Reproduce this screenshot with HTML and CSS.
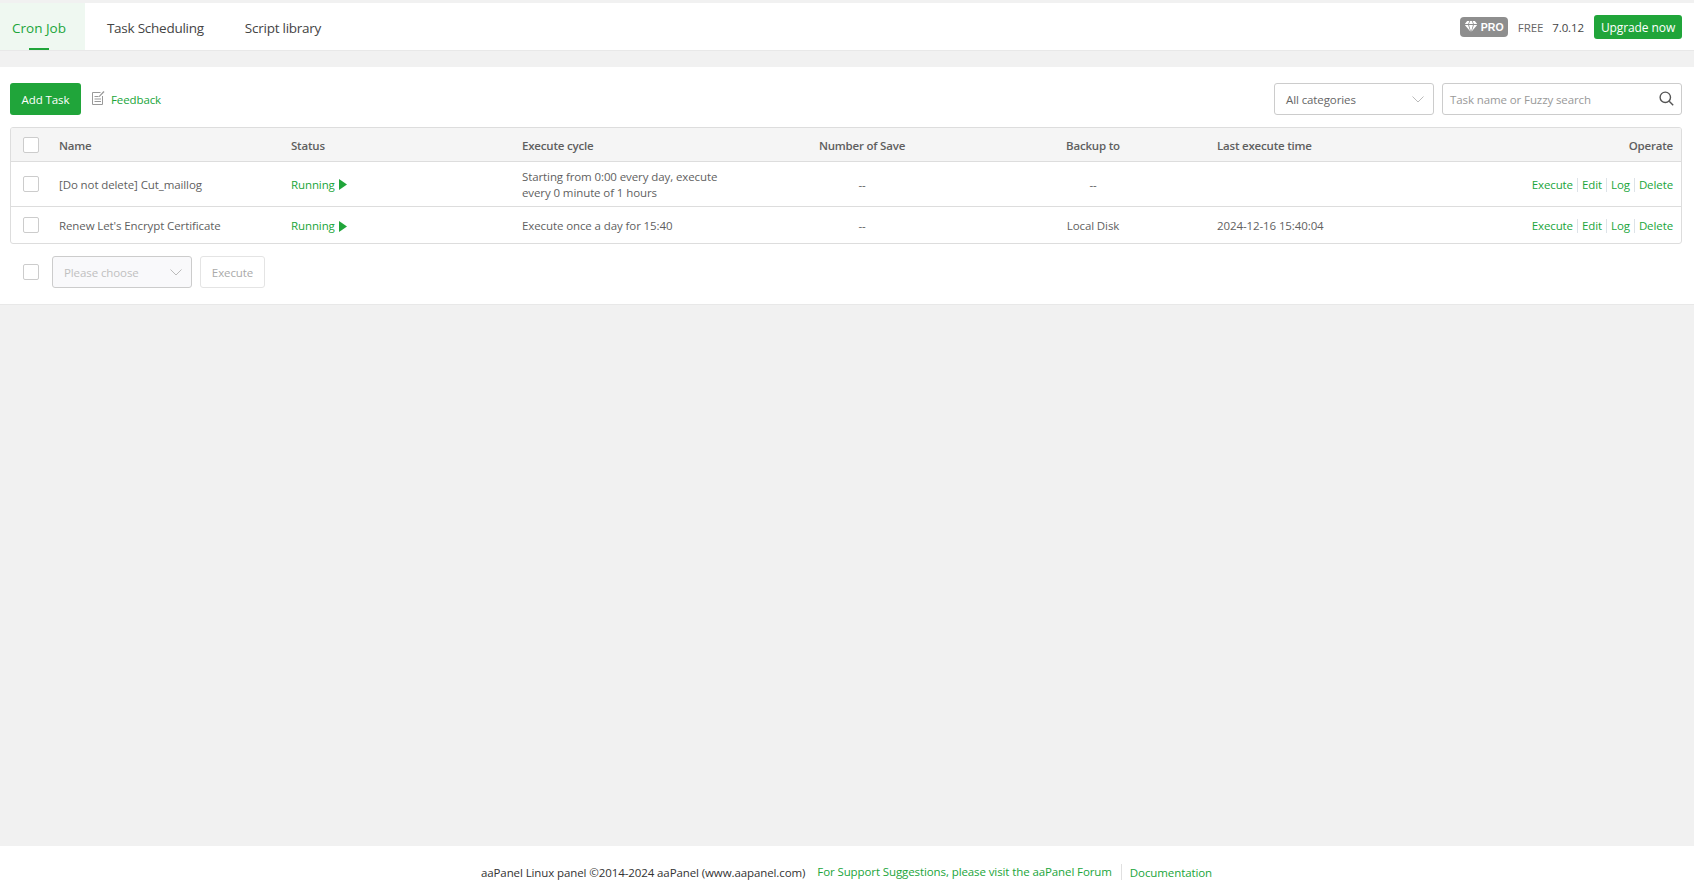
FILE: index.html
```html
<!DOCTYPE html>
<html lang="en">
<head>
<meta charset="utf-8">
<title>Cron</title>
<link rel="stylesheet" href="styles.css">
</head>
<body>
<div class="page">
  <header class="topbar">
    <nav class="tabs">
      <a class="tab active">Cron Job</a>
      <a class="tab">Task Scheduling</a>
      <a class="tab">Script library</a>
    </nav>
    <div class="top-right">
      <span class="pro">
        <svg class="gem" viewBox="0 0 16 13"><path d="M3.4 0h2.7L4.6 3.6H.7zM7 0h2L10.4 3.6H5.6zM9.9 0h2.7l2.7 3.6h-3.9zM.7 4.7h3.9l2.6 7.6zM5.7 4.7h4.6L8 12.6zM11.4 4.7h3.9l-6.5 7.6z" fill="#fff"/></svg>
        PRO
      </span>
      <span class="free">FREE</span>
      <span class="ver">7.0.12</span>
      <button class="btn-green upgrade">Upgrade now</button>
    </div>
  </header>

  <section class="card">
    <div class="toolbar">
      <div class="tool-left">
        <button class="btn-green add">Add Task</button>
        <a class="feedback">
          <svg class="fb-icon" viewBox="0 0 14 16" fill="none" stroke="#999" stroke-width="1"><path d="M9.5 2.5H1.5v12h10V6"/><path d="M3.5 6.5h4M3.5 9h6.5M3.5 11.5h6.5"/><path d="M7.5 6.5l5-5.5 1 1-5 5z" fill="#999" stroke="none"/></svg>
          <span>Feedback</span>
        </a>
      </div>
      <div class="tool-right">
        <div class="select cat"><span>All categories</span><svg class="chev" viewBox="0 0 12 7"><path d="M.5.5L6 6l5.500-5.500" fill="none" stroke="#bbb"/></svg></div>
        <div class="search">
          <span class="ph">Task name or Fuzzy search</span>
          <svg class="mag" viewBox="0 0 15 15" fill="none" stroke="#555" stroke-width="1.400"><circle cx="6.300" cy="6.300" r="5.200"/><path d="M10.200 10.200l4 4"/></svg>
        </div>
      </div>
    </div>

    <div class="table-wrap">
      <table class="tbl">
        <colgroup>
          <col class="c-check"><col class="c-name"><col class="c-status"><col class="c-cycle"><col class="c-save"><col class="c-backup"><col class="c-last"><col>
        </colgroup>
        <thead>
          <tr>
            <th><span class="check"></span></th>
            <th>Name</th>
            <th>Status</th>
            <th>Execute cycle</th>
            <th class="center">Number of Save</th>
            <th class="center">Backup to</th>
            <th>Last execute time</th>
            <th class="right">Operate</th>
          </tr>
        </thead>
        <tbody>
          <tr class="row-a">
            <td><span class="check"></span></td>
            <td>[Do not delete] Cut_maillog</td>
            <td><span class="running">Running<svg class="play" viewBox="0 0 8 11"><path d="M0 0l8 5.500L0 11z" fill="#20a53a"/></svg></span></td>
            <td>Starting from 0:00 every day, execute every 0 minute of 1 hours</td>
            <td class="center">--</td>
            <td class="center">--</td>
            <td></td>
            <td class="right ops"><a>Execute</a><i></i><a>Edit</a><i></i><a>Log</a><i></i><a>Delete</a></td>
          </tr>
          <tr class="row-b">
            <td><span class="check"></span></td>
            <td>Renew Let's Encrypt Certificate</td>
            <td><span class="running">Running<svg class="play" viewBox="0 0 8 11"><path d="M0 0l8 5.500L0 11z" fill="#20a53a"/></svg></span></td>
            <td>Execute once a day for 15:40</td>
            <td class="center">--</td>
            <td class="center">Local Disk</td>
            <td>2024-12-16 15:40:04</td>
            <td class="right ops"><a>Execute</a><i></i><a>Edit</a><i></i><a>Log</a><i></i><a>Delete</a></td>
          </tr>
        </tbody>
      </table>
    </div>

    <div class="batch">
      <span class="check"></span>
      <div class="select choose"><span>Please choose</span><svg class="chev" viewBox="0 0 12 7"><path d="M.5.5L6 6l5.500-5.500" fill="none" stroke="#bbb"/></svg></div>
      <button class="btn-exec">Execute</button>
    </div>
  </section>

  <div class="spacer"></div>

  <footer class="foot">
    <span class="copy">aaPanel Linux panel ©2014-2024 aaPanel (www.aapanel.com)</span>
    <a class="flink first">For Support Suggestions, please visit the aaPanel Forum</a>
    <a class="flink">Documentation</a>
  </footer>
</div>
</body>
</html>
```
FILE: styles.css
```css
* { box-sizing: border-box; }
html, body { margin: 0; height: 100%; }
body {
  background: #f1f1f1;
  font-family: "Open Sans", "Liberation Sans", sans-serif;
  font-size: 11.500px;
  letter-spacing: -0.1px;
  color: #666;
  overflow: hidden;
}
.page { display: flex; flex-direction: column; height: 881px; padding-top: 3px; }

.topbar {
  height: 48px;
  background: #fff;
  border-bottom: 1px solid #e8e8e8;
  display: flex;
  justify-content: space-between;
  align-items: stretch;
  flex: none;
}
.tabs { display: flex; }
.tab {
  font-size: 13.500px;
  letter-spacing: -0.25px;
  color: #444;
  padding: 0 20px;
  line-height: 50px;
  height: 47px;
  position: relative;
}
.tab:nth-child(2) { padding-left: 22px; }
.tab:nth-child(3) { padding-left: 21px; }
.tab.active {
  color: #20a53a;
  background: #eff8f1;
  letter-spacing: 0;
  padding: 0 19px 0 12px;
}
.tab.active::after {
  content: "";
  position: absolute;
  left: 29px;
  width: 20px;
  bottom: 0;
  height: 2px;
  background: #20a53a;
}
.top-right { display: flex; align-items: center; padding: 1px 12px 0 0; }
.pro {
  width: 48px;
  height: 20px;
  background: #8e8e8e;
  border-radius: 4px;
  color: #fff;
  font-family: "Liberation Sans", sans-serif;
  font-weight: 700;
  font-size: 10.500px;
  letter-spacing: 0;
  display: flex;
  align-items: center;
  gap: 3px;
  padding-left: 4px;
  margin-top: -1px;
}
.gem { width: 14px; height: 11px; }
.free { margin-left: 10px; color: #666; }
.ver { margin-left: 9px; color: #444; }
.btn-green {
  background: #20a53a;
  color: #fff;
  border: 0;
  border-radius: 3px;
  font-family: inherit;
  font-size: 11.500px;
  letter-spacing: -0.1px;
  padding: 0;
}
.upgrade { width: 88px; height: 24px; margin-left: 10px; font-size: 12px; }

.card {
  flex: none;
  margin-top: 16px;
  height: 238px;
  background: #fff;
  border-bottom: 1px solid #e8e8e8;
  padding: 16px 12px 0 10px;
}
.toolbar { display: flex; justify-content: space-between; align-items: center; height: 32px; }
.tool-left, .tool-right { display: flex; align-items: center; }
.add { width: 71px; height: 32px; }
.feedback { display: flex; align-items: center; margin-left: 10px; color: #20a53a; }
.fb-icon { width: 14px; height: 16px; margin-right: 6px; margin-top: -2px; }
.select {
  border: 1px solid #ccc;
  border-radius: 3px;
  height: 32px;
  display: flex;
  align-items: center;
  justify-content: space-between;
  padding: 0 9px 0 11px;
  color: #666;
}
.chev { width: 12px; height: 7px; }
.cat { width: 160px; }
.search {
  width: 240px;
  height: 32px;
  margin-left: 8px;
  border: 1px solid #ccc;
  border-radius: 3px;
  display: flex;
  align-items: center;
  justify-content: space-between;
  padding: 0 7px 0 7px;
}
.ph { color: #999; }
.mag { width: 15px; height: 15px; margin-top: -1px; }

.table-wrap {
  margin-top: 12px;
  border: 1px solid #ddd;
  border-radius: 3px;
  overflow: hidden;
}
.tbl { width: 100%; border-collapse: collapse; table-layout: fixed; }
.c-check { width: 38px; }
.c-name { width: 232px; }
.c-status { width: 231px; }
.c-cycle { width: 233px; }
.c-save { width: 234px; }
.c-backup { width: 228px; }
.c-last { width: 260px; }
th, td { padding: 2px 10px 0; text-align: left; font-weight: 400; color: #5f5f5f; line-height: 16px; }
th { background: #f5f5f5; height: 33px; font-weight: 600; letter-spacing: -0.2px; padding-top: 4px; }
thead tr { border-bottom: 1px solid #ddd; }
tbody tr + tr { border-top: 1px solid #ddd; }
.row-a td { height: 45px; }
.row-b td { height: 37px; padding-top: 3px; }
th:first-child { padding: 2px 0 0 12px; }
td:first-child, .row-b td:first-child { padding: 0 0 0 12px; }
.center, th.center { text-align: center; }
.right, th.right { text-align: right; padding-right: 8px; }
.check {
  display: block;
  width: 16px;
  height: 16px;
  border: 1px solid #ccc;
  border-radius: 2px;
  background: #fff;
}
.running { color: #20a53a; display: inline-flex; align-items: center; }
.play { width: 8px; height: 11px; margin-left: 4px; }
.ops a { color: #20a53a; }
.ops i {
  display: inline-block;
  width: 1px;
  height: 14px;
  margin: 0 4px;
  background: #dde3e8;
  vertical-align: -3px;
}

.batch { display: flex; align-items: center; margin-top: 12px; padding-left: 13px; }
.choose {
  width: 140px;
  margin-left: 13px;
  background: #f9f9fb;
  color: #c0c0c0;
  padding: 0 9px 0 11px;
}
.btn-exec {
  width: 65px;
  height: 32px;
  margin-left: 8px;
  background: #fff;
  border: 1px solid #e4e4e4;
  border-radius: 3px;
  color: #aaa;
  font-family: inherit;
  font-size: 11.500px;
  letter-spacing: -0.1px;
  padding: 0;
}
.spacer { flex: 1; }

.foot {
  flex: none;
  height: 35px;
  background: #fff;
  display: flex;
  justify-content: center;
  align-items: center;
  padding-top: 17px;
  padding-left: 7px;
  color: #555;
}
.foot .copy { color: #333; }
.flink { color: #20a53a; padding: 0 8px; }
.flink.first { margin-left: 4px; border-right: 1px solid #e0e0e0; line-height: 16px; padding-right: 9px; }
```
